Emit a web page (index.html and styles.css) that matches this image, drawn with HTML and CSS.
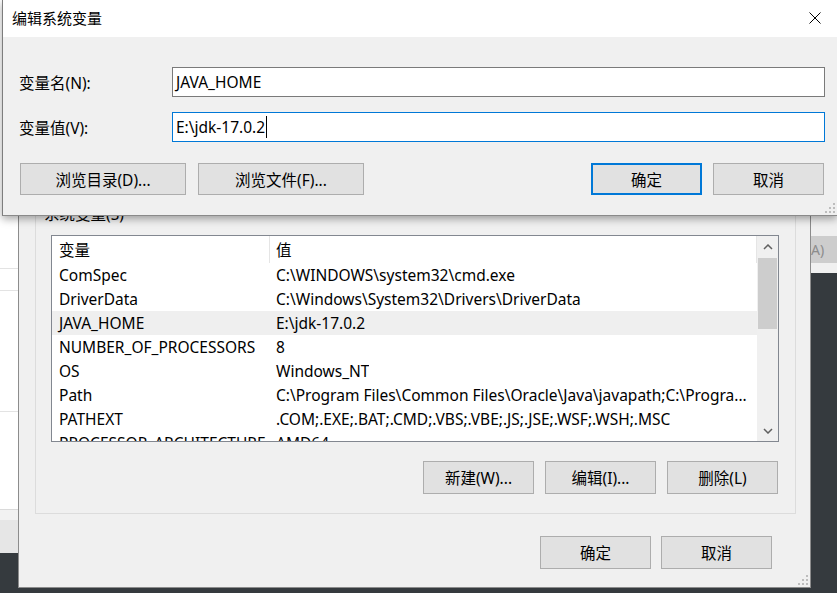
FILE: index.html
```html
<!DOCTYPE html>
<html lang="zh-CN">
<head>
  <meta charset="UTF-8" />
  <title>编辑系统变量</title>
  <link rel="stylesheet" href="styles.css">
</head>
<body>
<div class="desktop">

  <div class="side-left">
    <div class="sl-a"></div>
    <div class="sl-b"></div>
    <div class="sl-c"></div>
    <div class="sl-d"></div>
    <div class="sl-band"></div>
  </div>

  <div class="side-right">
    <div class="sr-band">A)</div>
  </div>

  <!-- 环境变量窗口 (被对话框挡住上半部分) -->
  <div class="env-win">
    <div class="group">
      <span class="group-label">系统变量(S)</span>
      <div class="list">
        <div class="rows">
          <div class="row head"><div class="c1">变量</div><div class="c2">值</div></div>
          <div class="row"><div class="c1">ComSpec</div><div class="c2">C:\WINDOWS\system32\cmd.exe</div></div>
          <div class="row"><div class="c1">DriverData</div><div class="c2">C:\Windows\System32\Drivers\DriverData</div></div>
          <div class="row sel"><div class="c1">JAVA_HOME</div><div class="c2">E:\jdk-17.0.2</div></div>
          <div class="row"><div class="c1">NUMBER_OF_PROCESSORS</div><div class="c2">8</div></div>
          <div class="row"><div class="c1">OS</div><div class="c2">Windows_NT</div></div>
          <div class="row"><div class="c1">Path</div><div class="c2">C:\Program Files\Common Files\Oracle\Java\javapath;C:\Progra...</div></div>
          <div class="row"><div class="c1">PATHEXT</div><div class="c2">.COM;.EXE;.BAT;.CMD;.VBS;.VBE;.JS;.JSE;.WSF;.WSH;.MSC</div></div>
          <div class="row"><div class="c1">PROCESSOR_ARCHITECTURE</div><div class="c2">AMD64</div></div>
        </div>
        <div class="scrollbar">
          <div class="sb-btn"><svg width="10" height="6" viewBox="0 0 10 6"><polyline points="1,5 5,1 9,5" fill="none" stroke="#606060" stroke-width="1.5"/></svg></div>
          <div class="sb-thumb"></div>
          <div class="sb-track"></div>
          <div class="sb-btn"><svg width="10" height="6" viewBox="0 0 10 6"><polyline points="1,1 5,5 9,1" fill="none" stroke="#606060" stroke-width="1.5"/></svg></div>
        </div>
      </div>
      <div class="btn-row list-btns">
        <div class="btn">新建(W)...</div>
        <div class="btn">编辑(I)...</div>
        <div class="btn">删除(L)</div>
      </div>
    </div>
    <div class="btn-row env-btns">
      <div class="btn">确定</div>
      <div class="btn">取消</div>
    </div>
    <svg class="grip" width="11" height="11" viewBox="0 0 11 11"><g fill="#bdbdbd"><rect x="8" y="0" width="2" height="2"/><rect x="4" y="4" width="2" height="2"/><rect x="8" y="4" width="2" height="2"/><rect x="0" y="8" width="2" height="2"/><rect x="4" y="8" width="2" height="2"/><rect x="8" y="8" width="2" height="2"/></g></svg>
  </div>

  <!-- 编辑系统变量 对话框 -->
  <div class="dialog">
    <div class="titlebar">
      <span class="title">编辑系统变量</span>
      <svg width="12" height="12" viewBox="0 0 12 12"><path d="M0.5 0.5 L11.5 11.5 M11.5 0.5 L0.5 11.5" stroke="#000" stroke-width="1"/></svg>
    </div>
    <div class="dlg-body">
      <div class="form">
        <label>变量名(N):</label>
        <div class="field">JAVA_HOME</div>
        <label>变量值(V):</label>
        <div class="field focus"><span class="caret">E:\jdk-17.0.2</span></div>
      </div>
      <div class="dlg-btns">
        <div class="btn-group">
          <div class="btn wide">浏览目录(D)...</div>
          <div class="btn wide">浏览文件(F)...</div>
        </div>
        <div class="btn-group right">
          <div class="btn default">确定</div>
          <div class="btn">取消</div>
        </div>
      </div>
    </div>
    <svg class="grip" width="11" height="11" viewBox="0 0 11 11"><g fill="#bdbdbd"><rect x="8" y="0" width="2" height="2"/><rect x="4" y="4" width="2" height="2"/><rect x="8" y="4" width="2" height="2"/><rect x="0" y="8" width="2" height="2"/><rect x="4" y="8" width="2" height="2"/><rect x="8" y="8" width="2" height="2"/></g></svg>
  </div>

</div>
</body>
</html>
```

FILE: styles.css
```css
body {
  margin: 0;
  font-family: "Noto Sans", "Noto Sans CJK SC", sans-serif;
  font-size: 15.5px;
  color: #000;
}
.desktop {
  position: relative;
  width: 837px;
  height: 593px;
  overflow: hidden;
  background: #353a3e;
}

/* windows behind */
.side-left {
  position: absolute;
  left: 0;
  top: 0;
  width: 20px;
  height: 553px;
  background: #fff;
  display: flex;
  flex-direction: column;
}
.sl-a { height: 268px; border-bottom: 1px solid #e3e3e3; }
.sl-b { height: 21px; border-bottom: 1px solid #e3e3e3; }
.sl-c { height: 120px; border-bottom: 1px solid #e3e3e3; }
.sl-d { height: 97px; border-bottom: 1px solid #dadada; }
.sl-band { flex: 1; background: #e6e6e6; border-top: 10px solid #f2f2f2; }

.side-right {
  position: absolute;
  left: 805px;
  top: 200px;
  width: 40px;
  height: 73px;
  background: #f0f0f0;
  border-top: 16px solid #e4e4e4;
  box-sizing: border-box;
}
.sr-band {
  margin-top: 20px;
  height: 27px;
  line-height: 27px;
  background: #cdcdcd;
  color: #8c8c8c;
  padding-left: 6px;
  font-size: 14px;
}

.env-win {
  position: absolute;
  left: 18px;
  top: 180px;
  width: 793px;
  height: 408px;
  box-sizing: border-box;
  border: 1px solid #8c8c8c;
  background: #f0f0f0;
  padding: 33px 14px 0 16px;
}
.group {
  position: relative;
  width: 761px;
  height: 300px;
  box-sizing: border-box;
  border: 1px solid #dcdcdc;
  padding: 20px 16px 0 15px;
}
.group-label {
  position: absolute;
  left: 6px;
  top: -10px;
  padding: 0 2px;
  background: #f0f0f0;
  line-height: 18px;
}
.list {
  height: 207px;
  box-sizing: border-box;
  border: 1px solid #828790;
  background: #fff;
  display: flex;
  overflow: hidden;
}
.rows {
  flex: 1;
  overflow: hidden;
}
.row {
  display: flex;
  align-items: center;
  height: 24px;
  white-space: nowrap;
}
.row.head {
  height: 27px;
  align-items: stretch;
  border-right: 1px solid #e5e5e5;
}
.row.head .c1, .row.head .c2 {
  display: flex;
  align-items: center;
}
.row.head .c1 {
  border-right: 1px solid #e5e5e5;
}
.row.sel {
  background: #efefef;
}
.c1 {
  width: 218px;
  box-sizing: border-box;
  padding-left: 7px;
  flex: none;
  overflow: hidden;
}
.c2 {
  padding-left: 6px;
  overflow: hidden;
}
.scrollbar {
  width: 21px;
  flex: none;
  background: #f0f0f0;
  display: flex;
  flex-direction: column;
}
.sb-btn {
  height: 21px;
  display: flex;
  align-items: center;
  justify-content: center;
}
.sb-thumb {
  height: 71px;
  margin: 1px 1px 0 1px;
  background: #cdcdcd;
}
.sb-track { flex: 1; }

.btn-row {
  display: flex;
  justify-content: flex-end;
}
.list-btns {
  margin-top: 19px;
  margin-right: 1px;
  gap: 11px;
}
.env-btns {
  margin-top: 22px;
  margin-right: 24px;
  gap: 10px;
}
.btn {
  width: 111px;
  height: 33px;
  box-sizing: border-box;
  border: 1px solid #adadad;
  background: #e1e1e1;
  display: flex;
  align-items: center;
  justify-content: center;
  white-space: nowrap;
}
.grip {
  position: absolute;
  right: 1px;
  bottom: 1px;
}

/* dialog */
.dialog {
  position: absolute;
  left: 2px;
  top: 0;
  width: 835px;
  height: 216px;
  box-sizing: border-box;
  border-left: 1px solid #7d7d7d;
  border-bottom: 1px solid #8a8a8a;
  background: #f0f0f0;
  box-shadow: 0 3px 8px rgba(0, 0, 0, 0.35);
}
.titlebar {
  height: 37px;
  background: #fff;
  display: flex;
  align-items: center;
  justify-content: space-between;
  padding: 0 16px 2px 9px;
  box-sizing: border-box;
}
.title {
  font-size: 15px;
}
.dlg-body {
  padding: 30px 12px 0 16px;
}
.form {
  display: grid;
  grid-template-columns: 153px 1fr;
  row-gap: 15px;
  align-items: center;
}
.field {
  height: 30px;
  box-sizing: border-box;
  border: 1px solid #7a7a7a;
  background: #fff;
  padding-left: 3px;
  line-height: 28px;
}
.field.focus {
  border-color: #0078d7;
}
.caret {
  border-right: 1px solid #000;
  padding-right: 1px;
}
.dlg-btns {
  margin-top: 21px;
  display: flex;
  justify-content: space-between;
}
.btn-group {
  display: flex;
  gap: 12px;
  margin-left: 1px;
}
.btn-group.right {
  gap: 11px;
  margin: 0 1px 0 0;
}
.dlg-btns .btn {
  height: 32px;
}
.btn.wide {
  width: 166px;
}
.btn.default {
  border: 2px solid #0078d7;
}
```
